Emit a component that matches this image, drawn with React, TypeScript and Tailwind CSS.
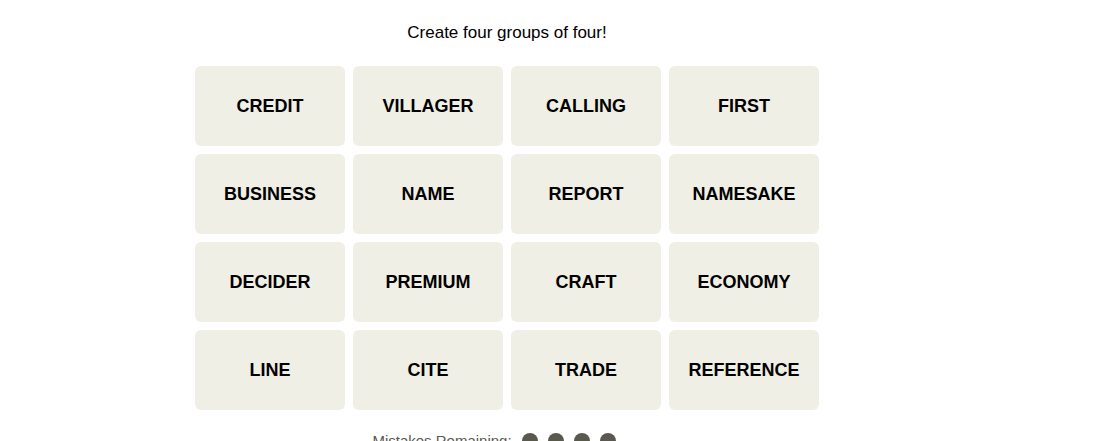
import React from 'react';

const words = [
  'CREDIT', 'VILLAGER', 'CALLING', 'FIRST',
  'BUSINESS', 'NAME', 'REPORT', 'NAMESAKE',
  'DECIDER', 'PREMIUM', 'CRAFT', 'ECONOMY',
  'LINE', 'CITE', 'TRADE', 'REFERENCE',
];

const App: React.FC = () => {
  return (
    <div className="w-[1014px] bg-white flex flex-col items-center" style={{ fontFamily: '"Liberation Sans", Arial, sans-serif' }}>
      <p className="mt-[23px] h-[20px] leading-[20px] text-[17px] text-black">Create four groups of four!</p>
      <div className="mt-[23px] grid grid-cols-4 gap-2 w-[624px]">
        {words.map((w) => (
          <button
            key={w}
            className="h-[80px] w-[150px] rounded-md bg-[#efefe6] text-[18px] font-bold text-black flex items-center justify-center"
          >
            {w}
          </button>
        ))}
      </div>
      <div className="mt-[20px] flex items-center gap-[10px] text-[#5a594e] text-[15px]">
        <span>Mistakes Remaining:</span>
        <div className="flex gap-[10px]">
          {[0, 1, 2, 3].map((i) => (
            <span key={i} className="w-4 h-4 rounded-full bg-[#5a594e]" />
          ))}
          <span className="w-4 h-4 rounded-full invisible" />
        </div>
      </div>
    </div>
  );
};

export default App;
